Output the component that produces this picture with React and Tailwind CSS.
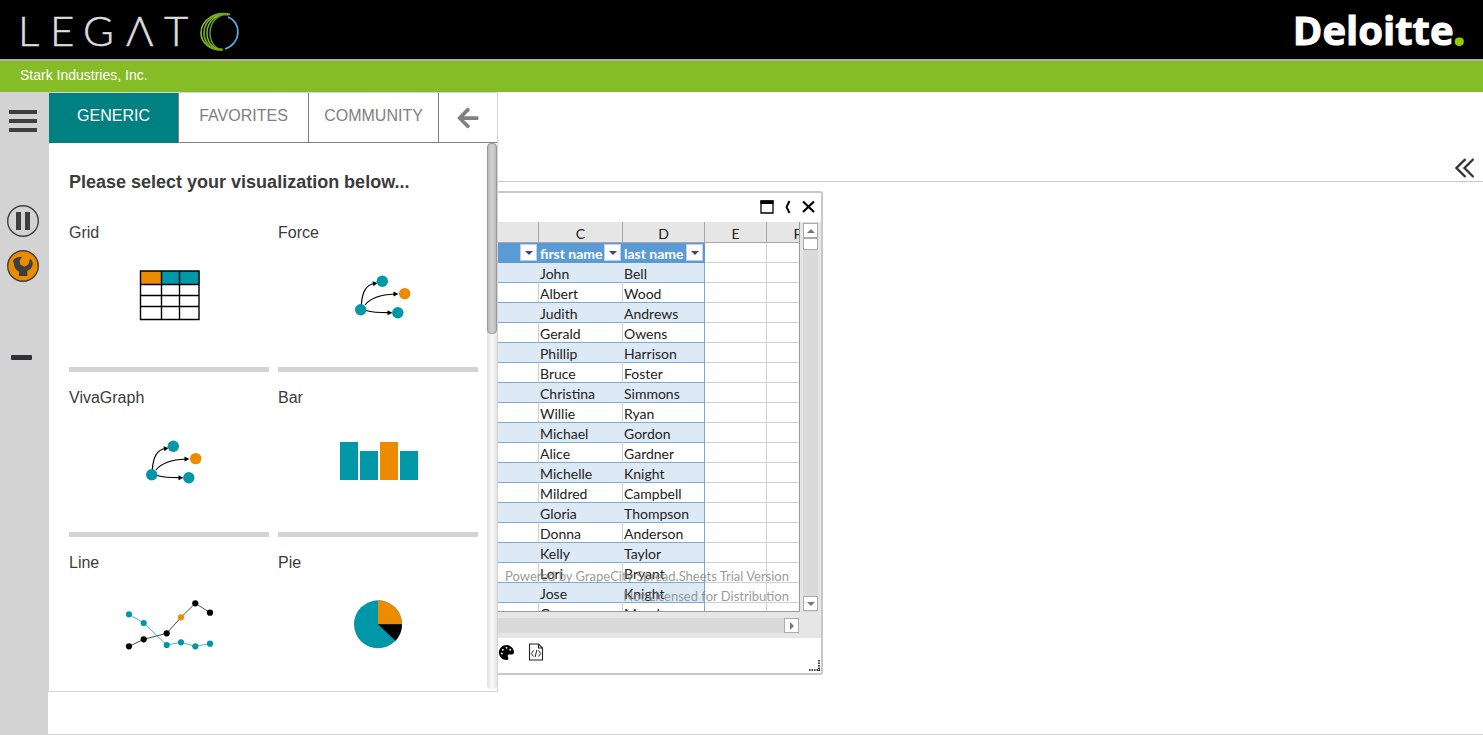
import React from "react";
import { FaPalette } from "react-icons/fa6";
import { FaArrowLeft } from "react-icons/fa";

const TEAL = "#0097a9";
const ORANGE = "#ed8b00";

function LegatoLogo() {
  return (
    <svg className="h-[59px] w-[226px]" viewBox="0 0 226 59">
      <g fill="#dcdcdc" stroke="#dcdcdc" strokeWidth="0.5" fontFamily="Lato, sans-serif" fontWeight="300" fontSize="42">
        <text x="2" y="46">L</text>
        <text x="34" y="46">E</text>
        <text x="67" y="46">G</text>
        <text x="110" y="46">Λ</text>
        <text x="148" y="46">T</text>
      </g>
      <g fill="none">
        <path d="M212 17C225.500 22 226 43 209 49" stroke="#5aa9dc" strokeWidth="1.800" />
        <path d="M214 14.500C199 11 185 20 185 33C185 43 195 51 207 49.500" stroke="#86bc25" strokeWidth="1.600" />
        <path d="M213 14.500C200 12 188 20 188 33C188 43 196 50.500 206 49.500" stroke="#6f9e1f" strokeWidth="1.800" />
        <path d="M212 14.500C201 13 191 21 191 33C191 42 197 50 206 49.500" stroke="#86bc25" strokeWidth="1.400" />
        <path d="M211 14.500C202 14 194 22 194 33C194 41 198 49 207 49.500" stroke="#6f9e1f" strokeWidth="1.400" />
      </g>
    </svg>
  );
}

function GridIcon() {
  return (
    <>
      <rect x="71.500" y="30" width="21" height="14" fill={ORANGE} />
      <rect x="92.500" y="30" width="38" height="14" fill={TEAL} />
      <path
        d="M71.500 30H130V78.500H71.500ZM92.500 30V78.500M110.500 30V78.500M71 43.500H130.500M71 54.500H130.500M71 65.500H130.500"
        fill="none"
        stroke="#000"
        strokeWidth="1.400"
      />
    </>
  );
}

function ForceIcon() {
  return (
    <>
      <g fill="none" stroke="#000" strokeWidth="1.200">
        <path d="M83.300 64C84 52 87 44 96 42.500" />
        <path d="M87 64C93 56 106 53.500 117 53" />
        <path d="M88 69.500C95 71.500 103 71.700 111 71.700" />
      </g>
      <path d="M94.500 40.200L99.500 42L95.500 45.200ZM115.500 50.500L120.500 53L115.500 55.500ZM109.500 69.200L114.500 71.700L109.500 74.200Z" />
      <g fill={TEAL}>
        <circle cx="82.700" cy="68.700" r="5.700" />
        <circle cx="104.300" cy="40.300" r="5.700" />
        <circle cx="119.800" cy="71.700" r="5.700" />
      </g>
      <circle cx="126.700" cy="52.600" r="5.700" fill={ORANGE} />
    </>
  );
}

function BarIcon() {
  return (
    <>
      <rect x="62" y="36" width="18" height="38" fill={TEAL} />
      <rect x="82" y="45" width="18" height="29" fill={TEAL} />
      <rect x="102" y="36" width="18" height="38" fill={ORANGE} />
      <rect x="122" y="45" width="18" height="29" fill={TEAL} />
    </>
  );
}

const FALLING = [[60, 43.3], [74.7, 52], [97.7, 74], [112, 71.3], [126.3, 75.3], [141, 72.7]];
const RISING = [[60, 75.3], [74.7, 68.3], [97.7, 62.3], [112, 46.3], [126.3, 32.3], [141, 41.7]];

function LineIcon() {
  return (
    <>
      <polyline points={FALLING.join(" ")} fill="none" stroke={TEAL} strokeWidth="0.700" />
      <polyline points={RISING.join(" ")} fill="none" stroke="#000" strokeWidth="0.700" />
      {FALLING.map(([x, y]) => (
        <circle key={x} cx={x} cy={y} r="3.100" fill={TEAL} />
      ))}
      {RISING.map(([x, y], i) => (
        <circle key={x} cx={x} cy={y} r="3.100" fill={i === 3 ? ORANGE : "#000"} />
      ))}
    </>
  );
}

function PieIcon() {
  return (
    <>
      <circle cx="100" cy="53.300" r="24" fill={TEAL} />
      <path d="M100 53.300V29.300A24 24 0 0 1 124 53.300Z" fill={ORANGE} />
      <path d="M100 53.300H124A24 24 0 0 1 117.500 69.700Z" />
    </>
  );
}

const CHARTS = [
  ["Grid", GridIcon],
  ["Force", ForceIcon],
  ["VivaGraph", ForceIcon],
  ["Bar", BarIcon],
  ["Line", LineIcon],
  ["Pie", PieIcon],
];

function Sidebar() {
  return (
    <aside className="flex w-12 shrink-0 flex-col items-start bg-[#d3d3d3]">
      <button aria-label="Menu" className="mt-[18px] ml-[9px] flex flex-col gap-[5px]">
        <span className="h-1 w-7 bg-[#3f3f3f]" />
        <span className="h-1 w-7 bg-[#3f3f3f]" />
        <span className="h-1 w-7 bg-[#3f3f3f]" />
      </button>
      <button aria-label="Pause" className="mt-[73px] ml-[7px]">
        <svg className="size-8" viewBox="0 0 32 32">
          <circle cx="16" cy="16" r="15.300" fill="none" stroke="#3f3f3f" strokeWidth="1.400" />
          <path d="M9 7h5v18H9zM18 7h5v18h-5z" fill="#3f3f3f" />
        </svg>
      </button>
      <button aria-label="Tools" className="mt-[13px] ml-[7px]">
        <svg className="size-8" viewBox="0 0 32 32">
          <circle cx="16" cy="16" r="15.300" fill={ORANGE} stroke="#3f3f3f" strokeWidth="1.400" />
          <path
            d="M15 7.300C10.500 6.500 7 8.500 5.700 11.500C6.500 12.500 7 13 7 14.500C7.300 18 9.500 20.500 12 21.500V26H20.300V21C23.500 19.500 25.700 17 25.700 13.500C25.700 11.500 24.700 10 23 8.500L21.500 14.500L17.500 16.800L13.300 14.500L12.500 10.500Z"
            fill="#3f3f3f"
          />
        </svg>
      </button>
      <button aria-label="Collapse" className="mt-[73px] ml-[11px] h-[5px] w-[21px] rounded-[1px] bg-[#2f3136]" />
    </aside>
  );
}

function VisualizationPanel() {
  return (
    <section className="absolute top-0 left-0 z-10 flex h-[600px] w-[450px] flex-col border border-[#d3d3d3] bg-white">
      <nav className="flex h-[50px] shrink-0 text-base leading-6 text-[#808080]">
        <button className="w-[130px] border-r border-[#808080] bg-[#008080] pb-[5px] text-white">GENERIC</button>
        <button className="w-[130px] border-r border-b border-[#808080] pb-1">FAVORITES</button>
        <button className="w-[130px] border-r border-b border-[#808080] pb-1">COMMUNITY</button>
        <button aria-label="Back" className="flex flex-1 items-center justify-center border-b border-[#808080]">
          <FaArrowLeft className="size-6" />
        </button>
      </nav>
      <div className="flex min-h-0 flex-1">
        <div className="flex-1 overflow-hidden pt-[27px] pl-5 text-[#3b3b3b]">
          <h2 className="mb-[13px] text-lg leading-6 font-bold">Please select your visualization below...</h2>
          <div className="grid grid-cols-[200px_200px] gap-x-[9px]">
            {CHARTS.map(([name, Icon]) => (
              <button key={name} className="flex h-[165px] flex-col border-b-[5px] border-[#d3d3d3] pt-[17px] text-left">
                <span className="text-base leading-[18px]">{name}</span>
                <svg className="h-[107px] w-[200px]" viewBox="0 1 200 107">
                  <Icon />
                </svg>
              </button>
            ))}
          </div>
        </div>
        <div className="mb-[2px] w-[10px] rounded bg-linear-to-r from-[#dedede] via-[#fafafa] to-[#e4e4e4]">
          <div className="h-[191px] rounded border border-[#999] bg-linear-to-r from-[#bbb] via-[#d2d2d2] to-[#bbb]" />
        </div>
      </div>
    </section>
  );
}

const PEOPLE = [
  ["John", "Bell"],
  ["Albert", "Wood"],
  ["Judith", "Andrews"],
  ["Gerald", "Owens"],
  ["Phillip", "Harrison"],
  ["Bruce", "Foster"],
  ["Christina", "Simmons"],
  ["Willie", "Ryan"],
  ["Michael", "Gordon"],
  ["Alice", "Gardner"],
  ["Michelle", "Knight"],
  ["Mildred", "Campbell"],
  ["Gloria", "Thompson"],
  ["Donna", "Anderson"],
  ["Kelly", "Taylor"],
  ["Lori", "Bryant"],
  ["Jose", "Knight"],
  ["George", "Mendoza"],
];

function FilterHeader({ label }) {
  return (
    <th className="border-b border-[#5b9bd5] bg-[#5b9bd5] p-0 font-bold text-white">
      <div className="flex h-[19px] items-center justify-between pl-px">
        <span className="pt-[2px] whitespace-nowrap">{label}</span>
        <button aria-label="Filter" className="mr-[2px] flex size-[17px] shrink-0 items-center justify-center border border-[#c3cfe0] bg-white">
          <svg className="h-1 w-2" viewBox="0 0 8 4">
            <path d="M0 0H8L4 4Z" fill="#44447a" />
          </svg>
        </button>
      </div>
    </th>
  );
}

function Sheet() {
  return (
    <div className="relative h-[390px] w-[348px] overflow-hidden border-r border-b border-[#9a9a9a] bg-white">
      <table className="w-[377px] table-fixed border-separate border-spacing-0 text-left font-[Lato,sans-serif] text-sm leading-[17px] text-[#222]">
        <colgroup>
          <col className="w-[87px]" />
          <col className="w-[84px]" />
          <col className="w-[82px]" />
          <col className="w-[62px]" />
          <col className="w-[62px]" />
        </colgroup>
        <thead>
          <tr className="h-[21px] bg-[#e6e6e6]">
            {["", "C", "D", "E", "F"].map((c) => (
              <th key={c} className="border-r border-b border-[#a6a6a6] p-0 pt-[2px] text-center font-normal">
                {c}
              </th>
            ))}
          </tr>
          <tr className="h-5">
            <FilterHeader label="" />
            <FilterHeader label="first name" />
            <FilterHeader label="last name" />
            <td className="border-r border-b border-[#d0d0d0] p-0" />
            <td className="border-r border-b border-[#d0d0d0] p-0" />
          </tr>
        </thead>
        <tbody>
          {PEOPLE.map(([first, last], i) => {
            const fill = i % 2 === 0 ? "border-r-[#ddeaf6] bg-[#ddeaf6]" : "border-r-[#d0d0d0]";
            return (
              <tr key={i} className="h-5">
                <td className={`border-r border-b border-b-[#7ba9d8] p-0 ${fill}`} />
                <td className={`border-r border-b border-b-[#7ba9d8] pt-[2px] pr-0 pb-0 pl-px ${fill}`}>{first}</td>
                <td className={`border-r border-b border-b-[#7ba9d8] pt-[2px] pr-0 pb-0 pl-px ${i % 2 === 0 ? "bg-[#ddeaf6]" : ""} border-r-[#7ba9d8]`}>
                  {last}
                </td>
                <td className="border-r border-b border-[#d0d0d0] p-0" />
                <td className="border-r border-b border-[#d0d0d0] p-0" />
              </tr>
            );
          })}
        </tbody>
      </table>
      <div className="pointer-events-none absolute right-[10px] bottom-[5px] text-right font-[Lato,sans-serif] text-[13px] leading-5 whitespace-nowrap text-[#808080]/80">
        <p>Powered by GrapeCity Spread.Sheets Trial Version</p>
        <p>Not Licensed for Distribution</p>
      </div>
    </div>
  );
}

function ScrollButton({ label, path }) {
  return (
    <button aria-label={label} className="flex size-[15px] shrink-0 items-center justify-center border border-[#ababab] bg-white">
      <svg className="size-2" viewBox="0 0 8 8">
        <path d={path} fill="#777" />
      </svg>
    </button>
  );
}

function SheetWindow() {
  return (
    <section className="absolute top-[99px] left-[402px] flex h-[484px] w-[373px] flex-col rounded-[3px] border-2 border-[#c8c8c8] bg-white">
      <div className="flex h-[29px] shrink-0 items-center justify-end gap-[10px] pr-[6px] pb-[2px]">
        <button aria-label="Maximize">
          <svg className="size-[14px]" viewBox="0 0 14 14">
            <path d="M1 1H13V13H1Z" fill="none" stroke="#000" strokeWidth="1.300" />
            <path d="M0.500 0.500H13.500V4H0.500Z" />
          </svg>
        </button>
        <button aria-label="Restore">
          <svg className="h-[14px] w-2" viewBox="0 0 8 14">
            <path d="M5.500 1L2.500 7L5.500 13" fill="none" stroke="#000" strokeWidth="1.900" />
          </svg>
        </button>
        <button aria-label="Close">
          <svg className="size-[13px]" viewBox="0 0 13 13">
            <path d="M1 1.500L12 12M12 1.500L1 12" stroke="#000" strokeWidth="2.200" />
          </svg>
        </button>
      </div>
      <div className="bg-[#e6e6e6]">
        <div className="flex">
          <Sheet />
          <div className="ml-[3px] flex w-[15px] flex-col bg-[#dadada] py-px">
            <ScrollButton label="Scroll up" path="M0 6H8L4 2Z" />
            <div className="h-3 border border-[#ababab] bg-white" />
            <div className="flex-1" />
            <ScrollButton label="Scroll down" path="M0 2H8L4 6Z" />
          </div>
        </div>
        <div className="mt-[6px] mb-[5px] flex w-[347px] justify-end bg-[#dadada]">
          <ScrollButton label="Scroll right" path="M2 0V8L6 4Z" />
        </div>
      </div>
      <div className="flex flex-1 items-start gap-[14px] pt-[5px] pl-[47px]">
        <button aria-label="Colors" className="mt-[2px]">
          <FaPalette className="size-[15px]" />
        </button>
        <button aria-label="Source">
          <svg className="h-[18px] w-4" viewBox="0 0 16 18" fill="none" stroke="#222">
            <path d="M1.500 1H10.500L14.500 5V17H1.500Z" strokeWidth="1.100" />
            <path d="M10.500 1V5H14.500" strokeWidth="1.100" />
            <path d="M5.500 7.500L3.300 10.500L5.500 13.500M10.500 7.500L12.700 10.500L10.500 13.500M8.800 7L7.200 14" />
          </svg>
        </button>
      </div>
      <svg className="absolute right-px bottom-[2px] size-3" viewBox="0 0 12 12">
        <path d="M11 1V12M1 11H12" stroke="#000" strokeWidth="1.500" strokeDasharray="1.500 1" fill="none" />
      </svg>
    </section>
  );
}

export default function App() {
  return (
    <div className="flex min-h-screen flex-col bg-white font-['Liberation_Sans',Arial,sans-serif]">
      <header className="flex h-[59px] items-center justify-between bg-black pr-[18px] pl-4">
        <LegatoLogo />
        <div className="font-['Open_Sans',sans-serif] text-[40px] leading-[56px] font-bold text-white [-webkit-text-stroke:1px_#fff]">
          Deloitte<span className="text-[#97cc04] [-webkit-text-stroke:2px_#97cc04]">.</span>
        </div>
      </header>
      <div className="h-[33px] border-t-2 border-[#b0b0a0] bg-[#86bc25] px-5 text-sm leading-[29px] text-white">
        Stark Industries, Inc.
      </div>
      <div className="flex flex-1">
        <Sidebar />
        <main className="relative flex min-w-0 flex-1 flex-col border-b border-[#d3d3d3]">
          <div className="flex h-[90px] items-end justify-end border-b border-[#c8c8c8] pr-2 pb-[3px]">
            <button aria-label="Expand">
              <svg className="size-5" viewBox="0 0 20 20">
                <path d="M10.500 1L1.500 10L10.500 19M18.500 1L9.500 10L18.500 19" fill="none" stroke="#333" strokeWidth="2.300" />
              </svg>
            </button>
          </div>
          <SheetWindow />
          <VisualizationPanel />
        </main>
      </div>
    </div>
  );
}
